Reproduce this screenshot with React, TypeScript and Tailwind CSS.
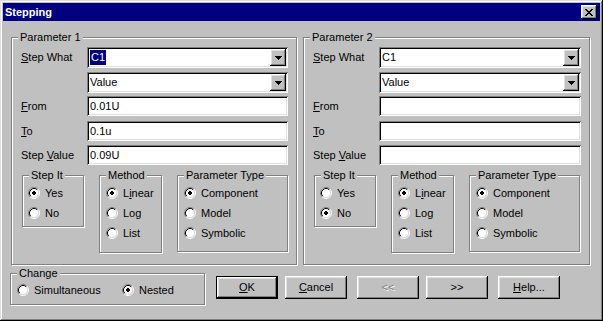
import React from "react";

const raised =
  "shadow-[inset_-1px_-1px_#000,inset_1px_1px_#fff,inset_-2px_-2px_#808080,inset_2px_2px_#dfdfdf]";
const sunken =
  "shadow-[inset_1px_1px_#808080,inset_-1px_-1px_#fff,inset_2px_2px_#000,inset_-2px_-2px_#dfdfdf]";

function Arrow() {
  return (
    <svg width="7" height="4" viewBox="0 0 7 4" shapeRendering="crispEdges">
      <path d="M0 0h7v1H0z M1 1h5v1H1z M2 2h3v1H2z M3 3h1v1H3z" fill="#000" />
    </svg>
  );
}

function CloseGlyph() {
  return (
    <svg width="8" height="7" viewBox="0 0 8 7" shapeRendering="crispEdges">
      <path
        d="M0 0h2v1H0z M6 0h2v1H6z M1 1h2v1H1z M5 1h2v1H5z M2 2h4v1H2z M3 3h2v1H3z M2 4h4v1H2z M1 5h2v1H1z M5 5h2v1H5z M0 6h2v1H0z M6 6h2v1H6z"
        fill="#000"
      />
    </svg>
  );
}

function RadioDot({ checked }: { checked?: boolean }) {
  return (
    <svg width="12" height="12" viewBox="0 0 12 12" className="shrink-0">
      <circle cx="6" cy="6" r="4.5" fill="#fff" />
      <path d="M2.11 9.89A5.5 5.5 0 0 1 9.89 2.11" fill="none" stroke="#808080" />
      <path d="M9.89 2.11A5.5 5.5 0 0 1 2.11 9.89" fill="none" stroke="#fff" />
      <path d="M2.82 9.18A4.5 4.5 0 0 1 9.18 2.82" fill="none" stroke="#000" />
      <path d="M9.18 2.82A4.5 4.5 0 0 1 2.82 9.18" fill="none" stroke="#dfdfdf" />
      {checked && (
        <path d="M5 4h2v1H5z M4 5h4v2H4z M5 7h2v1H5z" fill="#000" shapeRendering="crispEdges" />
      )}
    </svg>
  );
}

function Radio({ checked, children, className = "" }: { checked?: boolean; children: React.ReactNode; className?: string }) {
  return (
    <div className={`flex items-center h-[20px] ${className}`}>
      <RadioDot checked={checked} />
      <span className="ml-[5px]">{children}</span>
    </div>
  );
}

function Group({ label, className = "", children }: { label: string; className?: string; children?: React.ReactNode }) {
  return (
    <div className={`relative border border-[#808080] shadow-[inset_1px_1px_#fff,1px_1px_#fff] ${className}`}>
      <span className="absolute -top-[7px] left-[6px] bg-[#c0c0c0] px-[2px] leading-[13px]">{label}</span>
      {children}
    </div>
  );
}

function Combo({ value, selected }: { value: string; selected?: boolean }) {
  return (
    <div className={`flex-1 h-[21px] bg-white ${sunken} flex items-center p-[2px]`}>
      <div className="flex-1 flex items-center h-full pl-[1px]">
        {selected ? (
          <span className="bg-[#000080] text-white px-[1px] leading-[15px]">{value}</span>
        ) : (
          <span>{value}</span>
        )}
      </div>
      <div className={`w-[16px] h-[17px] bg-[#c0c0c0] ${raised} flex items-center justify-center`}>
        <Arrow />
      </div>
    </div>
  );
}

function Edit({ value }: { value: string }) {
  return (
    <div className={`flex-1 h-[20px] bg-white ${sunken} flex items-center pl-[3px]`}>
      <span>{value}</span>
    </div>
  );
}

type ParamProps = {
  title: string;
  from: string;
  to: string;
  step: string;
  stepIt: "yes" | "no";
  selected?: boolean;
  width: string;
};

function ParamGroup({ title, from, to, step, stepIt, selected, width }: ParamProps) {
  return (
    <Group label={title} className={`${width} h-[228px]`}>
      {/* Fields */}
      <div className="flex flex-col pl-[9px] pr-[8px] pt-[9px]">
        <div className="flex items-center">
          <span className="w-[66px] shrink-0">
            <u>S</u>tep What
          </span>
          <Combo value="C1" selected={selected} />
        </div>
        <div className="flex items-center mt-[4px]">
          <span className="w-[66px] shrink-0" />
          <Combo value="Value" />
        </div>
        <div className="flex items-center mt-[3px]">
          <span className="w-[66px] shrink-0">
            <u>F</u>rom
          </span>
          <Edit value={from} />
        </div>
        <div className="flex items-center mt-[5px]">
          <span className="w-[66px] shrink-0">
            <u>T</u>o
          </span>
          <Edit value={to} />
        </div>
        <div className="flex items-center mt-[4px]">
          <span className="w-[66px] shrink-0">
            Step <u>V</u>alue
          </span>
          <Edit value={step} />
        </div>
      </div>

      {/* Options */}
      <div className="flex items-start gap-[15px] pl-[10px] mt-[10px]">
        <Group label="Step It" className="w-[62px] h-[52px] pl-[5px] pt-[7px]">
          <Radio checked={stepIt === "yes"}>Yes</Radio>
          <Radio checked={stepIt === "no"}>No</Radio>
        </Group>
        <Group label="Method" className="w-[63px] h-[78px] pl-[6px] pt-[7px]">
          <Radio checked>
            L<u>i</u>near
          </Radio>
          <Radio>
            Lo<u>g</u>
          </Radio>
          <Radio>List</Radio>
        </Group>
        <Group label="Parameter Type" className="w-[111px] h-[77px] pl-[6px] pt-[7px]">
          <Radio checked>Component</Radio>
          <Radio>Model</Radio>
          <Radio>Symbolic</Radio>
        </Group>
      </div>
    </Group>
  );
}

function Btn({ children, def, disabled, className = "" }: { children: React.ReactNode; def?: boolean; disabled?: boolean; className?: string }) {
  const label = (
    <span className={disabled ? "text-[#808080] [text-shadow:1px_1px_#fff]" : ""}>{children}</span>
  );
  if (def) {
    return (
      <div className={`w-[62px] h-[23px] border border-black ${className}`}>
        <div className={`w-full h-full ${raised} flex items-center justify-center`}>{label}</div>
      </div>
    );
  }
  return (
    <div className={`w-[62px] h-[23px] ${raised} flex items-center justify-center ${className}`}>{label}</div>
  );
}

export default function App() {
  return (
    <div className="w-[603px] h-[321px] bg-[#c0c0c0] p-[3px] shadow-[inset_-1px_-1px_#000,inset_1px_1px_#dfdfdf,inset_-2px_-2px_#808080,inset_2px_2px_#fff] font-['Liberation_Sans',Arial,sans-serif] text-[11px] leading-[13px] text-black flex flex-col select-none">
      {/* Title bar */}
      <div className="h-[18px] bg-[#000080] flex items-center justify-between pl-[2px] pr-[3px] shrink-0">
        <span className="text-white font-bold">Stepping</span>
        <div className={`w-[16px] h-[14px] bg-[#c0c0c0] ${raised} flex items-center justify-center`}>
          <CloseGlyph />
        </div>
      </div>

      {/* Parameters */}
      <div className="flex pl-[8px] pt-[16px] gap-[6px]">
        <ParamGroup title="Parameter 1" from="0.01U" to="0.1u" step="0.09U" stepIt="yes" selected width="w-[286px]" />
        <ParamGroup title="Parameter 2" from="" to="" step="" stepIt="no" width="w-[287px]" />
      </div>

      {/* Change + buttons */}
      <div className="flex items-start pl-[7px] mt-[8px]">
        <Group label="Change" className="w-[195px] h-[32px] flex pl-[6px] pt-[6px]">
          <Radio className="w-[105px]">Simultaneous</Radio>
          <Radio checked>Nested</Radio>
        </Group>
        <Btn def className="ml-[11px] mt-[3px]">
          <u>O</u>K
        </Btn>
        <Btn className="ml-[7px] mt-[3px]">
          <u>C</u>ancel
        </Btn>
        <Btn disabled className="ml-[10px] mt-[3px]">
          &lt;&lt;
        </Btn>
        <Btn className="ml-[7px] mt-[3px]">&gt;&gt;</Btn>
        <Btn className="ml-[10px] mt-[3px]">
          <u>H</u>elp...
        </Btn>
      </div>
    </div>
  );
}
